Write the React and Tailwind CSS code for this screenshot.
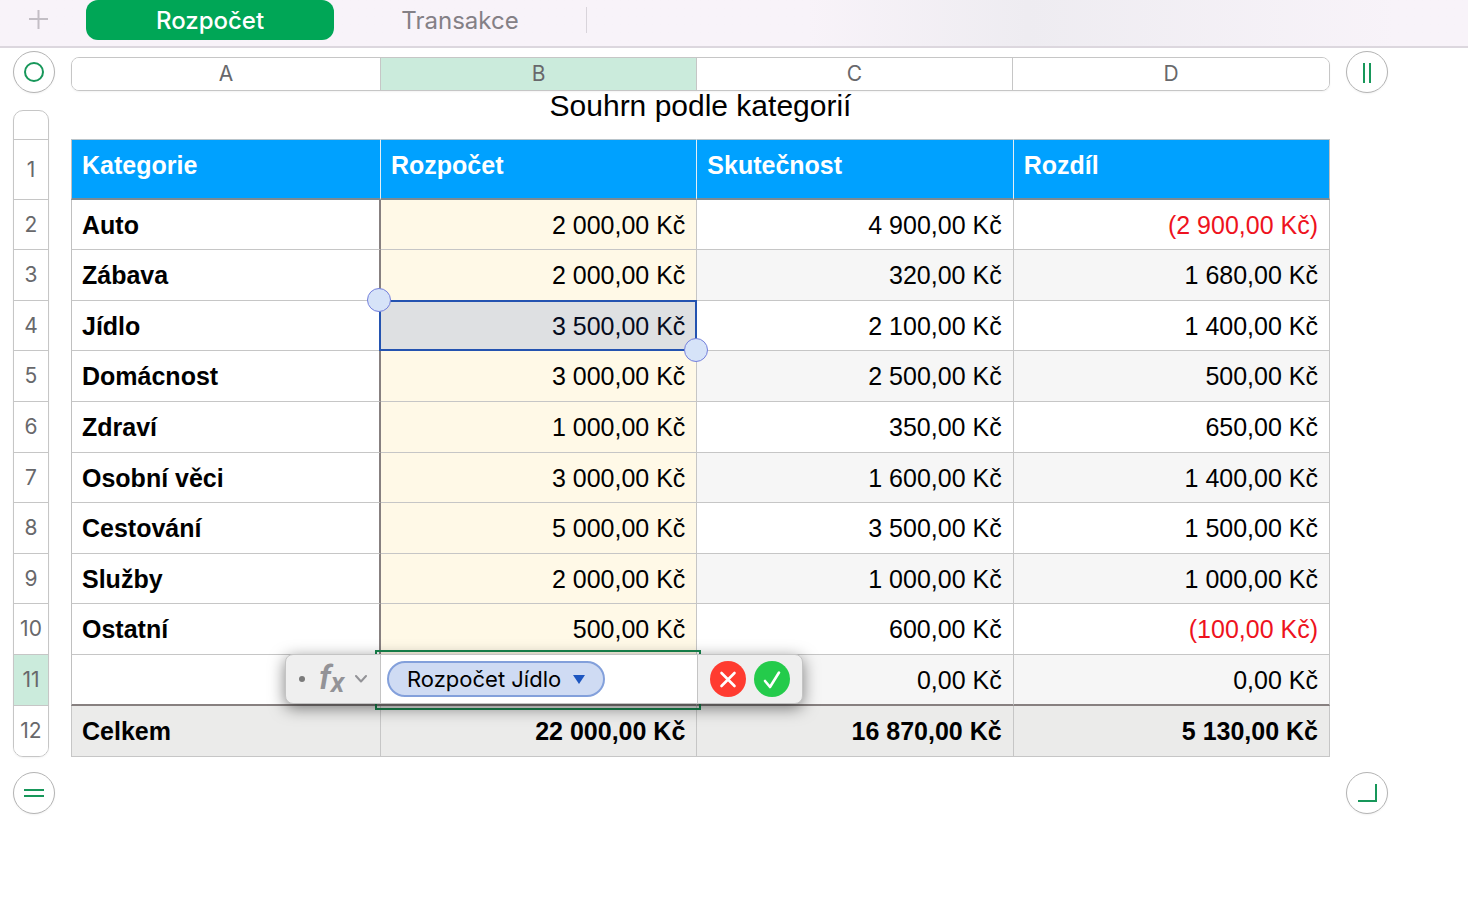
import React from 'react';
import clsx from 'clsx';

const columns = ['A', 'B', 'C', 'D'];

const rows = [
    { id: 2, name: 'Auto', budget: '2 000,00 Kč', actual: '4 900,00 Kč', diff: '(2 900,00 Kč)', height: 'h-[50px]' },
    { id: 3, name: 'Zábava', budget: '2 000,00 Kč', actual: '320,00 Kč', diff: '1 680,00 Kč', height: 'h-[51px]' },
    { id: 4, name: 'Jídlo', budget: '3 500,00 Kč', actual: '2 100,00 Kč', diff: '1 400,00 Kč', height: 'h-[50px]' },
    { id: 5, name: 'Domácnost', budget: '3 000,00 Kč', actual: '2 500,00 Kč', diff: '500,00 Kč', height: 'h-[51px]' },
    { id: 6, name: 'Zdraví', budget: '1 000,00 Kč', actual: '350,00 Kč', diff: '650,00 Kč', height: 'h-[51px]' },
    { id: 7, name: 'Osobní věci', budget: '3 000,00 Kč', actual: '1 600,00 Kč', diff: '1 400,00 Kč', height: 'h-[50px]' },
    { id: 8, name: 'Cestování', budget: '5 000,00 Kč', actual: '3 500,00 Kč', diff: '1 500,00 Kč', height: 'h-[51px]' },
    { id: 9, name: 'Služby', budget: '2 000,00 Kč', actual: '1 000,00 Kč', diff: '1 000,00 Kč', height: 'h-[50px]' },
    { id: 10, name: 'Ostatní', budget: '500,00 Kč', actual: '600,00 Kč', diff: '(100,00 Kč)', height: 'h-[51px]' },
    { id: 11, name: '', budget: '', actual: '0,00 Kč', diff: '0,00 Kč', height: 'h-[51px]' },
];

const rowHandles = [{ id: 1, height: 'h-[60px]' }, ...rows, { id: 12, height: 'h-[50px]' }];

const SheetTabs = () => (
    <nav className="flex h-12 items-start border-b-2 border-[#dcd7de] bg-linear-to-r from-[#f8f3f9] from-55% via-[#eeecf1] via-70% to-[#f8f3f9] to-95%">
        <button type="button" aria-label="Přidat list" className="flex h-10 w-[86px] items-center pl-7 text-[#c3bec5]">
            <svg viewBox="0 0 20 20" className="h-5 w-5" fill="none" stroke="currentColor" strokeWidth="2">
                <path d="M10.5 0v19M1 9h19" />
            </svg>
        </button>
        <button type="button" className="h-10 w-[248px] rounded-xl bg-[#00a656] pt-0.5 text-2xl font-medium text-white">
            Rozpočet
        </button>
        <button type="button" className="h-10 w-[252px] pt-0.5 text-2xl text-[#848086]">
            Transakce
        </button>
        <span className="mt-[7px] h-[26px] w-px bg-[#d9d4db]" />
    </nav>
);

const RoundHandle = ({ label, children }) => (
    <button
        type="button"
        aria-label={label}
        className="flex h-[42px] w-[42px] items-center justify-center rounded-full border border-[#b4b4b4] bg-white shadow-xs"
    >
        <svg viewBox="0 0 40 40" className="h-10 w-10" fill="none" stroke="#17975a" strokeWidth="2">
            {children}
        </svg>
    </button>
);

const ColumnHandles = () => (
    <div className="mt-[6px] grid h-[34px] grid-cols-[309px_repeat(3,minmax(0,1fr))] overflow-hidden rounded-lg border border-[#c6c6c6] shadow-xs">
        {columns.map((col) => (
            <button
                key={col}
                type="button"
                className={clsx(
                    'border-r border-[#c6c6c6] text-[21px] leading-8 text-[#68686b] last:border-r-0',
                    col === 'B' ? 'bg-[#cbebdc]' : 'bg-white'
                )}
            >
                {col}
            </button>
        ))}
    </div>
);

const RowHandles = () => (
    <div className="mt-[17px] flex w-9 flex-col self-start overflow-hidden rounded-[10px] border border-[#c6c6c6] shadow-xs">
        <span className="h-[29px] border-b border-[#c6c6c6]" />
        {rowHandles.map((row) => (
            <button
                key={row.id}
                type="button"
                className={clsx(
                    'border-b border-[#c6c6c6] text-[21px] text-[#68686b] last:border-b-0',
                    row.height,
                    row.id === 11 ? 'bg-[#cbebdc]' : 'bg-white'
                )}
            >
                {row.id}
            </button>
        ))}
    </div>
);

// Outline and drag knobs over the cell that the formula refers to
const ReferencedCell = () => (
    <div className="absolute -top-px -right-px -bottom-px -left-[2px] z-10 border-2 border-[#2453b0] bg-[#2453c8]/15">
        <span className="absolute -top-[14px] -left-[14px] h-6 w-6 rounded-full border border-[#7480dc] bg-[#d6e3f8]" />
        <span className="absolute -right-[13px] -bottom-[13px] h-6 w-6 rounded-full border border-[#7480dc] bg-[#d6e3f8]" />
    </div>
);

const FormulaEditor = () => (
    <>
        <div className="absolute -top-[5px] -right-[5px] -bottom-[6px] -left-[6px] z-10 border-2 border-[#17884f]" />
        <div className="absolute -top-px -right-[107px] -left-[96px] z-20 flex h-[50px] rounded-lg border border-[#c4c4c4] bg-[#efefef] font-['Inter',sans-serif] shadow-[0_4px_16px_rgba(0,0,0,0.5)]">
            <div className="flex w-[95px] items-center border-r border-[#c4c4c4] pl-[13px]">
                <span className="h-[6px] w-[6px] rounded-full bg-[#7b7b7b]" />
                <button type="button" aria-label="Funkce" className="ml-[14px] flex items-center text-[#939397]">
                    <span className="flex w-[26px] items-start font-['Roboto',sans-serif] font-semibold italic">
                        <span className="text-[34px] leading-10">f</span>
                        <span className="pt-2 text-[28px] leading-9">x</span>
                    </span>
                    <svg viewBox="0 0 12 8" className="ml-[10px] h-2 w-3" fill="none" stroke="currentColor" strokeWidth="2" strokeLinecap="round" strokeLinejoin="round">
                        <path d="M1 1l5 5.500L11 1" />
                    </svg>
                </button>
            </div>
            <div className="flex flex-1 items-center bg-white pl-[6px]">
                <button type="button" className="flex h-9 items-center gap-3 rounded-full border-2 border-[#83a0db] bg-[#cfdbf3] px-[18px] text-[22px] whitespace-nowrap text-black">
                    Rozpočet Jídlo
                    <svg viewBox="0 0 12 9" className="h-[9px] w-3" fill="#1d56c0">
                        <path d="M0 0h12L6 9z" />
                    </svg>
                </button>
            </div>
            <div className="flex w-[105px] items-center gap-2 border-l border-[#c4c4c4] pl-3">
                <button type="button" aria-label="Zrušit" className="h-9 w-9 rounded-full bg-[#ff3b30]">
                    <svg viewBox="0 0 36 36" fill="none" stroke="#fff" strokeWidth="2.6" strokeLinecap="round">
                        <path d="M11.5 12l13 13M24.5 12l-13 13" />
                    </svg>
                </button>
                <button type="button" aria-label="Potvrdit" className="h-9 w-9 rounded-full bg-[#24cb4b]">
                    <svg viewBox="0 0 36 36" fill="none" stroke="#fff" strokeWidth="2.6" strokeLinecap="round" strokeLinejoin="round">
                        <path d="M11 20l5 6L25 11.500" />
                    </svg>
                </button>
            </div>
        </div>
    </>
);

const BudgetTable = () => (
    <table className="w-full table-fixed border-separate border-spacing-0 font-['Liberation_Sans',Arial,sans-serif] text-[25px] leading-7 whitespace-nowrap text-black">
        <caption className="pb-5 text-[30px] leading-[26px]">Souhrn podle kategorií</caption>
        <colgroup>
            <col className="w-[310px]" />
            <col />
            <col />
            <col />
        </colgroup>
        <thead>
            <tr className="h-[61px] bg-[#00a1ff] text-left align-top text-white">
                {['Kategorie', 'Rozpočet', 'Skutečnost', 'Rozdíl'].map((title) => (
                    <th
                        key={title}
                        scope="col"
                        className="border-t border-r border-b-2 border-t-[#b9c4ca] border-r-[#e4eef4] border-b-[#7d8a92] px-[10px] pt-[11px] first:border-l first:border-l-[#c0c0c0] last:border-r-[#c0c0c0]"
                    >
                        {title}
                    </th>
                ))}
            </tr>
        </thead>
        <tbody>
            {rows.map((row) => {
                const line = row.id === 11 ? 'border-b-2 border-b-[#878080]' : 'border-b border-b-[#c6c6c6]';
                const stripe = row.id % 2 ? 'bg-[#f6f6f6]' : 'bg-white';
                return (
                    <tr key={row.id} className={clsx('text-right', row.height)}>
                        <th scope="row" className={clsx('border-r-2 border-l border-r-[#878080] border-l-[#c0c0c0] px-[10px] text-left', line)}>
                            {row.name}
                        </th>
                        <td className={clsx('relative border-r border-r-[#c6c6c6] bg-[#fff9e7] px-[11px]', line)}>
                            {row.budget}
                            {row.id === 4 && <ReferencedCell />}
                            {row.id === 11 && <FormulaEditor />}
                        </td>
                        <td className={clsx('border-r border-r-[#c6c6c6] px-[11px]', line, stripe)}>{row.actual}</td>
                        <td
                            className={clsx(
                                'border-r border-r-[#c6c6c6] px-[11px]',
                                line,
                                stripe,
                                row.diff.startsWith('(') && 'text-[#ee1220]'
                            )}
                        >
                            {row.diff}
                        </td>
                    </tr>
                );
            })}
        </tbody>
        <tfoot>
            <tr className="h-[51px] bg-[#ebebea] text-right font-bold">
                <th scope="row" className="border-r border-b border-l border-[#c6c6c6] px-[10px] text-left">
                    Celkem
                </th>
                {['22 000,00 Kč', '16 870,00 Kč', '5 130,00 Kč'].map((sum) => (
                    <td key={sum} className="border-r border-b border-[#c6c6c6] px-[11px]">
                        {sum}
                    </td>
                ))}
            </tr>
        </tfoot>
    </table>
);

const App = () => {
    return (
        <div className="min-h-screen bg-white font-['Inter',sans-serif]">
            <SheetTabs />
            <main className="grid grid-cols-[42px_minmax(0,1fr)_42px] gap-x-4 pt-[3px] pr-20 pl-[13px]">
                <RoundHandle label="Vybrat tabulku">
                    <circle cx="20" cy="20" r="9" />
                </RoundHandle>
                <ColumnHandles />
                <RoundHandle label="Přidat sloupec">
                    <path d="M17 11v20M23 11v20" />
                </RoundHandle>

                <RowHandles />
                <BudgetTable />
                <span />

                <div className="pt-[15px]">
                    <RoundHandle label="Přidat řádek">
                        <path d="M10 17h20M10 23h20" />
                    </RoundHandle>
                </div>
                <span />
                <div className="pt-[15px]">
                    <RoundHandle label="Změnit velikost tabulky">
                        <path d="M29 11v17H11" />
                    </RoundHandle>
                </div>
            </main>
        </div>
    );
};

export default App;
